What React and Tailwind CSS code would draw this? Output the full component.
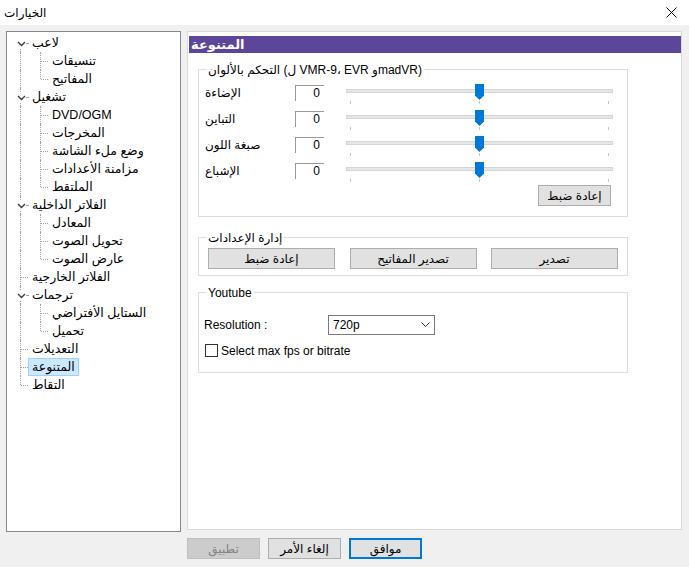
import React from 'react';

const rows = [
  { t: 'لاعب', l: 0, chev: true, first: true },
  { t: 'تنسيقات', l: 1 },
  { t: 'المفاتيح', l: 1, lastChild: true },
  { t: 'تشغيل', l: 0, chev: true },
  { t: 'DVD/OGM', l: 1 },
  { t: 'المخرجات', l: 1 },
  { t: 'وضع ملء الشاشة', l: 1 },
  { t: 'مزامنة الأعدادات', l: 1 },
  { t: 'الملتقط', l: 1, lastChild: true },
  { t: 'الفلاتر الداخلية', l: 0, chev: true },
  { t: 'المعادل', l: 1 },
  { t: 'تحويل الصوت', l: 1 },
  { t: 'عارض الصوت', l: 1, lastChild: true },
  { t: 'الفلاتر الخارجية', l: 0 },
  { t: 'ترجمات', l: 0, chev: true },
  { t: 'الستايل الأفتراضي', l: 1 },
  { t: 'تحميل', l: 1, lastChild: true },
  { t: 'التعديلات', l: 0 },
  { t: 'المتنوعة', l: 0, selected: true },
  { t: 'التقاط', l: 0, last: true },
];

function Chevron() {
  return (
    <svg width="9" height="6" viewBox="0 0 9 6" className="block">
      <polyline points="1,1 4.5,4.5 8,1" fill="none" stroke="#3c3c3c" strokeWidth="1.4" />
    </svg>
  );
}

function TreeRow({ r }) {
  let vTop = 'top-0';
  let vH = 'h-[18px]';
  if (r.first) { vTop = 'top-[9px]'; vH = 'h-[9px]'; }
  if (r.last) { vTop = 'top-0'; vH = 'h-[9px]'; }
  return (
    <div className="flex h-[18px] items-stretch">
      <div className="relative w-[21px] shrink-0">
        <span className={`absolute left-[13px] ${vTop} ${vH} border-l border-dotted border-[#a0a0a0]`} />
        {r.l === 0 && !r.chev && (
          <span className="absolute left-[14px] top-[9px] w-[7px] border-t border-dotted border-[#a0a0a0]" />
        )}
        {r.chev && (
          <>
            <span className="absolute left-[9px] top-[5px] w-[10px] h-[9px] bg-white flex items-center justify-center">
              <Chevron />
            </span>
            <span className="absolute left-[19px] top-[9px] w-[2px] border-t border-dotted border-[#a0a0a0]" />
          </>
        )}
      </div>
      {r.l === 1 && (
        <div className="relative w-[20px] shrink-0">
          <span
            className={`absolute left-[12px] top-0 ${r.lastChild ? 'h-[9px]' : 'h-[18px]'} border-l border-dotted border-[#a0a0a0]`}
          />
          <span className="absolute left-[13px] top-[9px] w-[7px] border-t border-dotted border-[#a0a0a0]" />
        </div>
      )}
      <span
        className={`h-[18px] px-[3px] border leading-[16px] text-[12.5px] whitespace-nowrap ${
          r.selected ? 'bg-[#cce8ff] border-[#99d1ff]' : 'border-transparent'
        }`}
      >
        {r.t}
      </span>
    </div>
  );
}

function Slider() {
  return (
    <div className="relative w-[267px] h-[22px]">
      <div className="absolute left-0 top-[5px] w-[267px] h-[4px] bg-[#e7e7e7] border border-[#d6d6d6]" />
      <span className="absolute left-[4px] top-[17px] h-[3px] border-l border-[#c4c4c4]" />
      <span className="absolute left-[133px] top-[17px] h-[3px] border-l border-[#c4c4c4]" />
      <span className="absolute left-[262px] top-[17px] h-[3px] border-l border-[#c4c4c4]" />
      <svg className="absolute left-[129px] top-0" width="9" height="16" viewBox="0 0 9 16">
        <polygon points="0,0 9,0 9,11.5 4.5,16 0,11.5" fill="#0078d7" />
      </svg>
    </div>
  );
}

function SliderRow({ label, last }) {
  return (
    <div className={`flex items-start ${last ? 'h-[22px]' : 'h-[26px]'}`}>
      <div className="w-[90px] mt-[1px] h-[16px] leading-[16px] text-[12px] whitespace-nowrap">{label}</div>
      <div className="w-[29px] h-[16px] mt-[1px] border-t border-l border-[#9a9a9a] text-right pr-[4px] leading-[14px] text-[12px] bg-white">
        0
      </div>
      <div className="ml-[22px]">
        <Slider />
      </div>
    </div>
  );
}

function Btn({ children, className = '', primary = false }) {
  return (
    <div
      className={`h-[21px] bg-[#e1e1e1] flex items-center justify-center text-[12px] leading-none whitespace-nowrap ${
        primary ? 'border-2 border-[#0078d7]' : 'border border-[#adadad]'
      } ${className}`}
    >
      {children}
    </div>
  );
}

function Legend({ children }) {
  return (
    <div className="-mt-[7px] ml-[7px] px-[2px] bg-white w-fit h-[14px] leading-[14px] text-[12px] whitespace-nowrap">
      {children}
    </div>
  );
}

export default function App() {
  return (
    <div className="w-[689px] h-[567px] bg-[#f0f0f0] flex flex-col text-black font-['Liberation_Sans','DejaVu_Sans',sans-serif] overflow-hidden">
      <div className="h-[25px] bg-white flex items-center justify-between pl-[4px] pr-[12px]">
        <span className="text-[12px] leading-none">الخيارات</span>
        <svg width="11" height="11" viewBox="0 0 11 11">
          <line x1="0.5" y1="0.5" x2="10.5" y2="10.5" stroke="#000" strokeWidth="1" />
          <line x1="10.5" y1="0.5" x2="0.5" y2="10.5" stroke="#000" strokeWidth="1" />
        </svg>
      </div>
      <div className="flex pt-[6px] pl-[6px]">
        <div className="w-[175px] h-[501px] bg-white border border-[#828790] pt-[2px]">
          {rows.map((r, i) => (
            <TreeRow key={i} r={r} />
          ))}
        </div>
        <div className="ml-[6px] flex flex-col">
          <div className="w-[495px] h-[499px] bg-white border border-[#dadada] flex flex-col">
            <div className="mt-[4px] ml-[1px] h-[17px] bg-[#5c4699] text-white font-bold text-[13px] leading-[17px] pl-[2px]">
              المتنوعة
            </div>
            <div className="ml-[10px] mt-[16px] w-[430px] h-[148px] border border-[#dcdcdc] flex flex-col">
              <Legend>التحكم بالألوان (ل VMR-9، EVR وmadVR)</Legend>
              <div className="mt-[7px] pl-[6px] flex flex-col">
                <SliderRow label="الإضاءة" />
                <SliderRow label="التباين" />
                <SliderRow label="صبغة اللون" />
                <SliderRow label="الإشباع" last />
              </div>
              <Btn className="self-end mr-[16px] mt-[1px] w-[73px]">إعادة ضبط</Btn>
            </div>
            <div className="ml-[10px] mt-[20px] w-[430px] h-[39px] border border-[#dcdcdc] flex flex-col">
              <Legend>إدارة الإعدادات</Legend>
              <div className="mt-[3px] ml-[9px] w-[410px] flex justify-between">
                <Btn className="w-[127px]">إعادة ضبط</Btn>
                <Btn className="w-[127px]">تصدير المفاتيح</Btn>
                <Btn className="w-[127px]">تصدير</Btn>
              </div>
            </div>
            <div className="ml-[10px] mt-[16px] w-[430px] h-[81px] border border-[#dcdcdc] flex flex-col">
              <Legend>Youtube</Legend>
              <div className="mt-[15px] pl-[5px] flex items-center">
                <span className="w-[124px] text-[12px] leading-none">Resolution :</span>
                <div className="w-[107px] h-[20px] border border-[#7a7a7a] bg-white flex items-center justify-between pl-[4px] pr-[4px]">
                  <span className="text-[12px] leading-none">720p</span>
                  <svg width="9" height="6" viewBox="0 0 9 6">
                    <polyline points="0.5,0.5 4.5,4.5 8.5,0.5" fill="none" stroke="#333" strokeWidth="1" />
                  </svg>
                </div>
              </div>
              <div className="mt-[9px] ml-[6px] flex items-center">
                <span className="w-[13px] h-[13px] border border-[#333] bg-white" />
                <span className="ml-[3px] text-[12px] leading-none">Select max fps or bitrate</span>
              </div>
            </div>
          </div>
          <div className="mt-[8px] flex gap-[8px]">
            <div className="w-[73px] h-[21px] bg-[#cccccc] border border-[#bfbfbf] text-[#838383] flex items-center justify-center text-[12px] leading-none">
              تطبيق
            </div>
            <Btn className="w-[73px]">إلغاء الأمر</Btn>
            <Btn className="w-[73px]" primary>موافق</Btn>
          </div>
        </div>
      </div>
    </div>
  );
}
